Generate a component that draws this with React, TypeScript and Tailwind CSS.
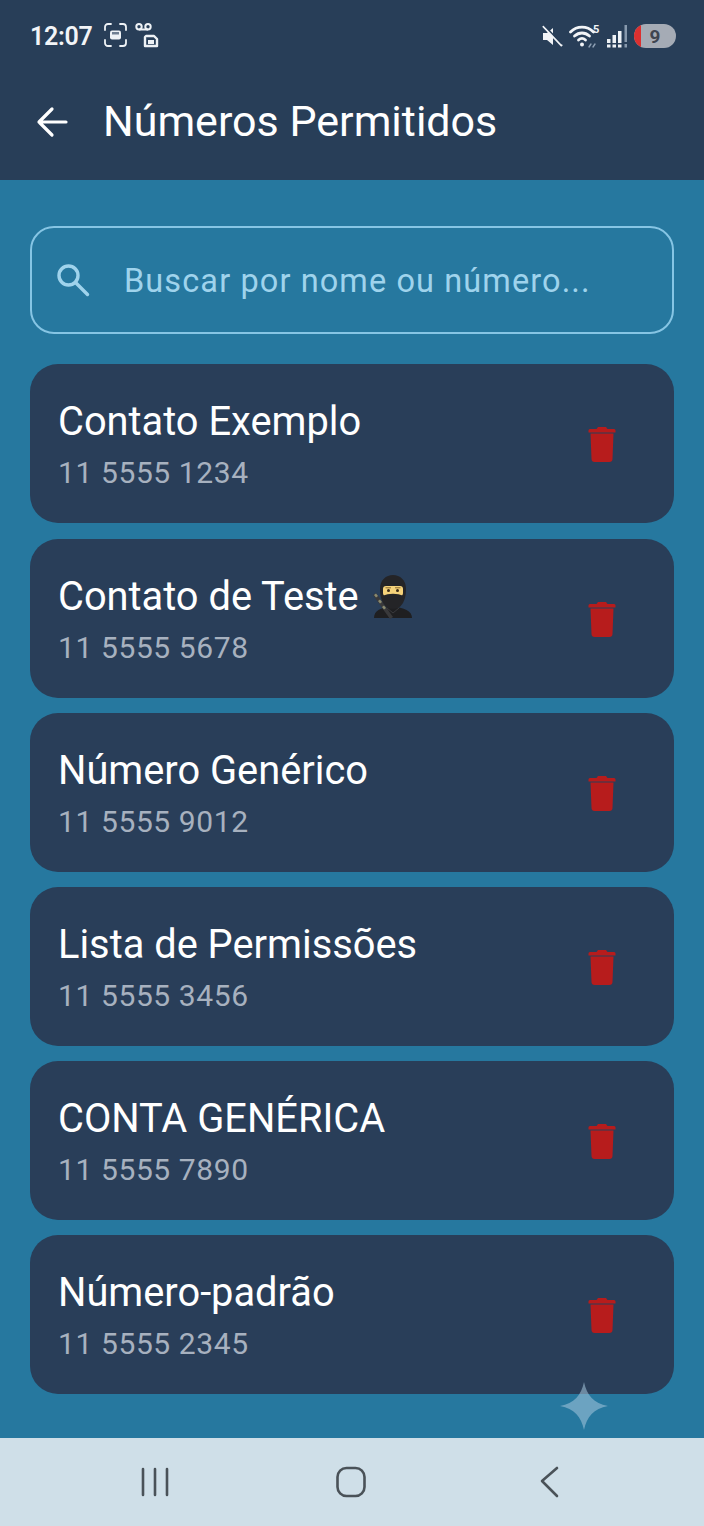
import React from "react";

interface Contact {
  name: string;
  phone: string;
  ninja?: boolean;
}

const contacts: Contact[] = [
  { name: "Contato Exemplo", phone: "11 5555 1234" },
  { name: "Contato de Teste", phone: "11 5555 5678", ninja: true },
  { name: "Número Genérico", phone: "11 5555 9012" },
  { name: "Lista de Permissões", phone: "11 5555 3456" },
  { name: "CONTA GENÉRICA", phone: "11 5555 7890" },
  { name: "Número-padrão", phone: "11 5555 2345" },
];

const Trash = () => (
  <svg width="28" height="35" viewBox="0 0 28 35" fill="#b71c1c">
    <path d="M10 0h8l1.500 2H26c1 0 1.500.8 1.500 1.600V5.500H.5V3.600C.5 2.800 1 2 2 2h6.500z" />
    <path d="M2.500 6.500h23L24.500 32c0 1.700-1.300 3-3 3h-15c-1.700 0-3-1.300-3-3z" />
  </svg>
);

const Ninja = () => (
  <svg width="40" height="44" viewBox="0 0 40 44">
    <path d="M1 43c0-7 6-11 18-11s20 4 20 11z" fill="#1f1f21" />
    <path d="M0 20l3-2 17 24-3 2z" fill="#39393b" />
    <path d="M1 20l2-1.500 2 2.500-2 1.500zM5 26l2-1.500 2 2.500-2 1.500zM9 32l2-1.500 2 2.500-2 1.500z" fill="#8a8a70" />
    <path d="M7 14C7 5 13 0 20 0s13 5 13 14c0 9-3 20-13 20S7 23 7 14z" fill="#242427" />
    <rect x="10" y="11" width="20" height="10" rx="3" fill="#f5d27a" />
    <path d="M10 21c5-3 15-3 20 0v3H10z" fill="#242427" />
    <circle cx="15.500" cy="15.500" r="1.500" fill="#3a2a15" />
    <circle cx="24.500" cy="15.500" r="1.500" fill="#3a2a15" />
    <path d="M12.500 12.800h5.500M22 12.800h5.500" stroke="#8a6a30" strokeWidth="1" />
    <path d="M14 33l6 5 6-5" stroke="#3a3a3d" strokeWidth="1" fill="none" />
  </svg>
);

const RecordIcons = () => (
  <svg width="56" height="26" viewBox="0 0 56 26" fill="none" stroke="#eef2f6">
    <g strokeWidth="1.800" strokeLinecap="round">
      <path d="M1 7V4c0-1.600 1.200-3 3-3h3M16 1h3c1.800 0 3 1.400 3 3v3M22 17v3c0 1.600-1.200 3-3 3h-3M7 23H4c-1.800 0-3-1.400-3-3v-3" />
    </g>
    <rect x="6" y="7.500" width="11" height="9" rx="2" fill="#eef2f6" stroke="none" />
    <rect x="8" y="9" width="7" height="2.500" fill="#6f7f92" stroke="none" />
    <circle cx="35" cy="3.800" r="2.700" strokeWidth="2" />
    <circle cx="44" cy="3.800" r="2.700" strokeWidth="2" />
    <path d="M35 6.500h9" strokeWidth="2" />
    <path d="M42 13h8l3 3v7H41v-9z" strokeWidth="2.400" strokeLinejoin="round" />
    <rect x="44" y="17" width="6" height="4" fill="#eef2f6" stroke="none" />
  </svg>
);

const StatusRight = () => (
  <div className="flex items-center">
    <svg width="24" height="24" viewBox="0 0 24 24" fill="#f2f4f7" className="mr-[5px]">
      <path d="M2 8h4l6-5v17l-6-5H2z" transform="translate(1 1)" />
      <path d="M3 2l19 20" stroke="#f2f4f7" strokeWidth="2.200" />
      <path d="M3 0l19 20" stroke="#283e58" strokeWidth="1.500" />
    </svg>
    <svg width="32" height="26" viewBox="0 0 32 26" fill="none" stroke="#f2f4f7" strokeWidth="2.800" strokeLinecap="round">
      <path d="M1.500 9C8 2.500 18 2.500 24.500 9" />
      <path d="M5.500 13c4.500-4 10.500-4 15 0" />
      <path d="M9.500 17c2.200-2 4.800-2 7 0" />
      <circle cx="13" cy="21.500" r="2" fill="#f2f4f7" stroke="none" />
      <path d="M20 24l2-3M24 24l2-3" stroke="#8ea0b4" strokeWidth="1.400" />
      <text x="24" y="10" fontFamily="Roboto, sans-serif" fontSize="11" fontWeight="700" fill="#f2f4f7" stroke="none">5</text>
    </svg>
    <svg width="21" height="24" viewBox="0 0 21 24" className="ml-[6px]">
      <g fill="#eef2f6">
        <rect x="0" y="15" width="3.500" height="4" />
        <rect x="0" y="20.500" width="3.500" height="3" />
        <rect x="5.500" y="11" width="3.500" height="8" />
        <rect x="5.500" y="20.500" width="3.500" height="3" />
        <rect x="11" y="7" width="3.500" height="12" />
        <rect x="11" y="20.500" width="3.500" height="3" />
      </g>
      <rect x="17.500" y="1" width="2.500" height="17" fill="#8799ad" />
      <rect x="17.500" y="20" width="2.500" height="3.500" fill="#8799ad" />
    </svg>
    <div className="relative ml-[6px] mr-[-2px] flex h-[24px] w-[42px] items-center justify-center overflow-hidden rounded-full bg-[#a5abb5]">
      <div className="absolute left-0 top-0 h-full w-[7px] bg-[#dc3030]" />
      <span className="text-[19px] font-bold leading-none text-[#3f4550]">9</span>
    </div>
  </div>
);

const ContactCard = ({ contact }: { contact: Contact }) => (
  <div className="flex h-[159px] items-center justify-between rounded-[28px] bg-[#293e59] pl-[29px] pr-[58px]">
    <div className="mt-[4px] flex flex-col">
      <div className="flex h-[44px] items-center gap-[14px] text-[39.800px] leading-none text-white">
        <span className="ml-[-1px]">{contact.name}</span>
        {contact.ninja && <Ninja />}
      </div>
      <div className="ml-[-1px] mt-[11px] text-[30px] leading-[36px] tracking-[0.6px] text-[#a7b1bf]">
        {contact.phone}
      </div>
    </div>
    <div className="mt-[2px]">
      <Trash />
    </div>
  </div>
);

export default function App() {
  return (
    <div className="relative flex h-[1526px] w-[704px] flex-col overflow-hidden bg-[#26789f] font-['Roboto',sans-serif]">
      <header className="h-[180px] shrink-0 bg-[#283e58] px-[30px]">
        <div className="flex h-[72px] items-center justify-between">
          <div className="flex items-center">
            <span className="text-[25px] font-semibold leading-none tracking-[-0.3px] text-[#f2f4f7]">12:07</span>
            <div className="ml-[12px]">
              <RecordIcons />
            </div>
          </div>
          <StatusRight />
        </div>
        <div className="mt-[24px] flex h-[52px] items-center">
          <svg width="32" height="32" viewBox="0 0 32 32" fill="none" stroke="#ffffff" strokeWidth="3.200" strokeLinecap="round" strokeLinejoin="round" className="ml-[6px]">
            <path d="M30 16H3M16 3L3 16l13 13" />
          </svg>
          <h1 className="mt-[-2px] ml-[35px] text-[43px] font-normal leading-none text-white">Números Permitidos</h1>
        </div>
      </header>

      <main className="flex flex-1 flex-col px-[30px] pt-[46px]">
        <div className="flex h-[108px] items-center rounded-[24px] border-2 border-[#86c5e4] px-[25px]">
          <svg width="34" height="34" viewBox="0 0 34 34" fill="none" stroke="#9fd3ec" strokeWidth="3.400" strokeLinecap="round" className="ml-[-1px]">
            <circle cx="12.500" cy="12.500" r="9.500" />
            <path d="M19.500 19.500L31.500 31.500" />
          </svg>
          <span className="ml-[34px] mt-[2px] text-[32.500px] leading-none tracking-[1.1px] text-[#9fd3ec]">
            Buscar por nome ou número...
          </span>
        </div>
        <div className="mt-[30.400px] flex flex-col gap-[15.200px]">
          {contacts.map((contact) => (
            <ContactCard key={contact.name} contact={contact} />
          ))}
        </div>
      </main>

      <svg
        width="48"
        height="48"
        viewBox="0 0 50 50"
        className="absolute left-[560px] top-[1382px]"
      >
        <path d="M25 0c3 14 10 22 25 25-15 3-22 11-25 25-3-14-10-22-25-25 15-3 22-11 25-25z" fill="#a5c6dc" fillOpacity="0.55" />
      </svg>

      <nav className="flex h-[88px] shrink-0 items-center bg-[#cfdfe8] pl-[141px]">
        <svg width="28" height="30" viewBox="0 0 28 30" stroke="#4a5258" strokeWidth="2.600" strokeLinecap="round">
          <path d="M2 2v26M14 2v26M26 2v26" />
        </svg>
        <svg width="30" height="32" viewBox="0 0 30 32" fill="none" stroke="#4a5258" strokeWidth="2.600" className="ml-[167px]">
          <rect x="1.500" y="2" width="27" height="28" rx="9" />
        </svg>
        <svg width="20" height="32" viewBox="0 0 20 32" fill="none" stroke="#4a5258" strokeWidth="2.600" strokeLinecap="round" strokeLinejoin="round" className="ml-[174px]">
          <path d="M17 2L2 15l15 15" />
        </svg>
      </nav>
    </div>
  );
}
